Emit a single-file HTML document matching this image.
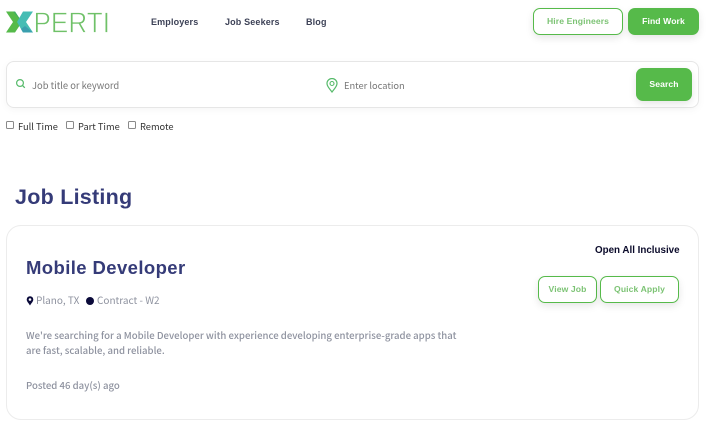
<!DOCTYPE html>
<html><head><meta charset="utf-8">
<style>
*{box-sizing:border-box;margin:0;padding:0}
html,body{width:706px;height:443px;background:#fff;overflow:hidden}
body{position:relative;font-family:"Liberation Sans",sans-serif;color:#333}
.a{position:absolute;white-space:nowrap}
.nav{top:16px;font-size:9px;line-height:12px;font-weight:700;color:#3d4257;letter-spacing:.15px;font-family:"Liberation Sans",sans-serif}
.btn{position:absolute;border-radius:7px;text-align:center;font-weight:700;font-size:8.600px;letter-spacing:.1px;box-shadow:0 3px 8px rgba(0,0,0,.1)}
.o{border:1.300px solid #56ba4a;background:#fff;color:#7cc374}
.f{background:#56ba4a;color:#fff}
.chk{position:absolute;top:121px;width:8px;height:8px;border:1px solid #8a8a8a;border-radius:1.500px;background:#fff}
.lab{top:119.500px;font-size:9.300px;line-height:12px;color:#333;font-family:"Noto Sans CJK JP",sans-serif}
.g{color:#8e929f;font-family:"Noto Sans CJK JP",sans-serif}
</style></head><body>
<svg class="a" style="left:0;top:0" width="120" height="40" viewBox="0 0 120 40">
<polygon points="6,11.500 15,11.500 22,22 15,32.500 6,32.500 13,22" fill="#56ba4a"/>
<polygon points="13,11.500 22,22 15,11.500" fill="#3fae62"/>
<polygon points="23,11.500 33,11.500 26,22 33,32.500 23,32.500 17,22" fill="#45bdb4"/>
<polygon points="25,26 33,32.500 23,32.500 21,29" fill="#3a9fae"/>
<text x="33.500" y="32.500" font-family="Liberation Sans" font-size="28.500" fill="#6fc168" stroke="#fff" stroke-width=".7" paint-order="fill" textLength="76.500" lengthAdjust="spacingAndGlyphs">PERTI</text>
</svg>
<div class="a nav" style="left:151px">Employers</div>
<div class="a nav" style="left:225px">Job Seekers</div>
<div class="a nav" style="left:306px">Blog</div>
<div class="btn o" style="left:533px;top:8px;width:90px;height:27px;line-height:25px">Hire Engineers</div>
<div class="btn f" style="left:628px;top:8px;width:71px;height:27px;line-height:27px">Find Work</div>

<div class="a" style="left:6px;top:61px;width:693px;height:47px;border:1px solid #e6e6e6;border-radius:8px;box-shadow:0 2px 8px rgba(0,0,0,.04)"></div>
<svg class="a" style="left:15px;top:78px" width="11" height="11" viewBox="0 0 11 11"><circle cx="5" cy="5" r="3.400" fill="none" stroke="#56ba6a" stroke-width="1.200"/><path d="M7.600 7.600L9.800 9.800" stroke="#56ba6a" stroke-width="1.300"/></svg>
<div class="a g" style="left:32px;top:78px;font-size:9.400px;line-height:14px;color:#777">Job title or keyword</div>
<svg class="a" style="left:326px;top:78px" width="12" height="15" viewBox="0 0 12 15"><path d="M6 14C3.500 10.500 1 8.500 1 5.500A5 5 0 0 1 11 5.500C11 8.500 8.500 10.500 6 14Z" fill="none" stroke="#56ba6a" stroke-width="1.200"/><circle cx="6" cy="5.500" r="2" fill="none" stroke="#56ba6a" stroke-width="1.100"/></svg>
<div class="a g" style="left:344px;top:78px;font-size:9.300px;line-height:14px;color:#777">Enter location</div>
<div class="btn f" style="left:636px;top:68px;width:56px;height:33px;line-height:33px">Search</div>

<div class="chk" style="left:6px"></div><div class="a lab" style="left:18px">Full Time</div>
<div class="chk" style="left:66px"></div><div class="a lab" style="left:78px">Part Time</div>
<div class="chk" style="left:128px"></div><div class="a lab" style="left:140px">Remote</div>

<div class="a" style="left:15px;top:184px;font-size:21.500px;line-height:26px;font-weight:700;color:#353b78;letter-spacing:.25px">Job Listing</div>

<div class="a" style="left:6px;top:225px;width:693px;height:195px;border:1px solid #ececec;border-radius:15px"></div>
<div class="a" style="left:26px;top:257px;font-size:18.500px;line-height:22px;font-weight:700;color:#353b78;letter-spacing:.4px">Mobile Developer</div>
<svg class="a" style="left:26px;top:296px" width="8" height="10" viewBox="0 0 8 10"><path d="M4 9.500C2.500 7 .7 5.500 .7 3.500A3.300 3.300 0 0 1 7.300 3.500C7.300 5.500 5.500 7 4 9.500Z" fill="#0a0a3a"/><circle cx="4" cy="3.500" r="1.300" fill="#fff"/></svg>
<div class="a g" style="left:36px;top:293px;font-size:10px;line-height:14px">Plano, TX</div>
<div class="a" style="left:86px;top:297px;width:8px;height:8px;border-radius:50%;background:#0a0a3a"></div>
<div class="a g" style="left:97px;top:293px;font-size:10px;line-height:14px">Contract - W2</div>
<div class="a" style="left:595px;top:245px;font-size:9.800px;line-height:12px;font-weight:700;color:#0a0a2a">Open All Inclusive</div>
<div class="btn o" style="left:538px;top:276px;width:59px;height:27px;line-height:25px">View Job</div>
<div class="btn o" style="left:600px;top:276px;width:79px;height:27px;line-height:25px">Quick Apply</div>
<div class="a g" style="left:26px;top:328px;font-size:9.600px;line-height:15px;font-weight:500">We're searching for a Mobile Developer with experience developing enterprise-grade apps that<br>are fast, scalable, and reliable.</div>
<div class="a g" style="left:26px;top:378px;font-size:9.600px;line-height:14px;font-weight:500">Posted 46 day(s) ago</div>
</body></html>
